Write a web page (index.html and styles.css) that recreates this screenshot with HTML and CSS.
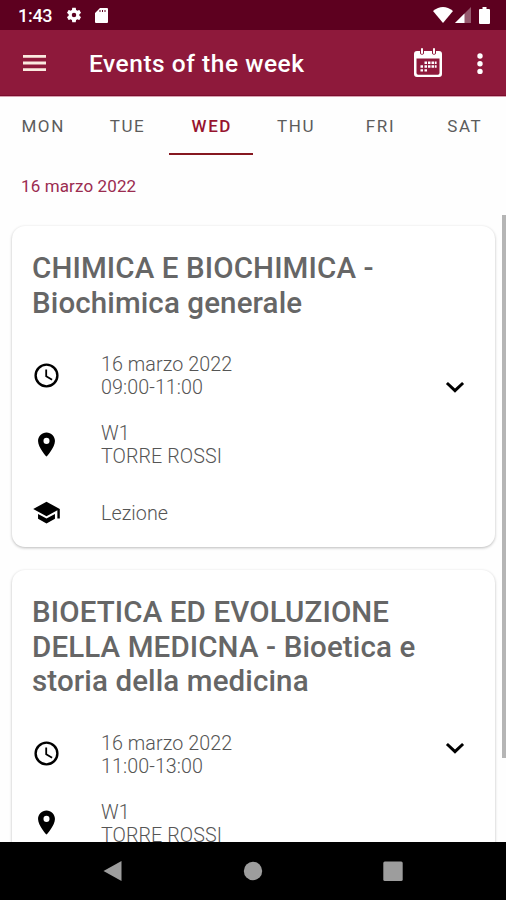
FILE: index.html
```
<!DOCTYPE html>
<html lang="it">
<head>
  <meta charset="UTF-8">
  <title>Events of the week</title>
  <link rel="stylesheet" href="styles.css">
</head>
<body>
  <svg class="symbols" width="0" height="0">
    <symbol id="clock" viewBox="0 0 24 24">
      <path d="M12 2a10 10 0 1 0 0 20 10 10 0 0 0 0-20zm0 18a8 8 0 1 1 0-16 8 8 0 0 1 0 16zm.5-13H11v6l5.250 3.150.750-1.230-4.500-2.670z"/>
    </symbol>
    <symbol id="place" viewBox="0 0 24 24">
      <path d="M12 2C8.130 2 5 5.130 5 9c0 5.250 7 13 7 13s7-7.750 7-13c0-3.870-3.130-7-7-7zm0 9.500a2.500 2.500 0 1 1 0-5 2.500 2.500 0 0 1 0 5z"/>
    </symbol>
    <symbol id="school" viewBox="0 0 24 24">
      <path d="M5 13.180v4L12 21l7-3.820v-4L12 17l-7-3.820zM12 3L1 9l11 6 9-4.910V17h2V9L12 3z"/>
    </symbol>
    <symbol id="expand" viewBox="0 0 24 24">
      <path d="M6.700 8.200L12 13.200l5.300-5 1.500 1.500L12 16.300 5.200 9.700z"/>
    </symbol>
  </svg>

  <div class="status-bar">
    <span class="time">1:43</span>
    <svg class="gear" viewBox="0 0 24 24"><path d="M19.140 12.940c.040-.3.060-.61.060-.94 0-.32-.02-.64-.07-.94l2.030-1.580c.18-.14.23-.41.12-.61l-1.920-3.320c-.12-.22-.37-.29-.59-.22l-2.390.96c-.5-.38-1.030-.7-1.620-.94l-.36-2.540c-.04-.24-.24-.41-.48-.41h-3.840c-.24 0-.43.17-.47.41l-.36 2.540c-.59.24-1.130.57-1.620.94l-2.390-.96c-.22-.08-.47 0-.59.22L2.740 8.870c-.12.21-.08.47.12.61l2.030 1.580c-.05.3-.09.63-.09.94s.02.64.07.94l-2.030 1.580c-.18.14-.23.41-.12.61l1.920 3.320c.12.22.37.29.59.22l2.390-.96c.5.38 1.030.7 1.620.94l.36 2.540c.05.24.24.41.48.41h3.840c.24 0 .44-.17.47-.41l.36-2.540c.59-.24 1.130-.56 1.620-.94l2.390.96c.22.08.47 0 .59-.22l1.920-3.320c.12-.22.07-.47-.12-.61l-2.010-1.580zM12 15a3 3 0 1 1 0-6 3 3 0 0 1 0 6z"/></svg>
    <svg class="sd" viewBox="0 0 13 15"><path fill-rule="evenodd" d="M5 0h7q1 0 1 1v13q0 1-1 1H1q-1 0-1-1V5zM4.500 2v2h1V2zm2.500 0v2h1V2zm2.500 0v2h1V2z"/></svg>
    <svg class="wifi" viewBox="0 0 20 16"><path d="M0 4Q10-4 20 4L10 16z"/></svg>
    <svg class="signal" viewBox="0 0 16 16"><path opacity=".35" d="M16 0v16H0z"/><path d="M9.500 6.500V16H0z"/></svg>
    <svg class="battery" viewBox="0 0 11 17"><path d="M3.500 0h4v2H10q1 0 1 1v13q0 1-1 1H1q-1 0-1-1V3q0-1 1-1h2.500z"/></svg>
  </div>

  <header class="app-bar">
    <svg class="menu" viewBox="0 0 23 16"><path d="M0 0h23v2.800H0zM0 6.600h23v2.800H0zM0 13.200h23V16H0z"/></svg>
    <h1>Events of the week</h1>
    <svg class="calendar" viewBox="0 0 28 30">
      <path fill-rule="evenodd" d="M3 3h3v2.500q2 2.500 4 0V3h8v2.500q2 2.500 4 0V3h3q3 0 3 3v20q0 3-3 3H3q-3 0-3-3V6q0-3 3-3zM2.500 10.500V25q0 1.700 1.700 1.700h19.600q1.700 0 1.700-1.700V10.500z"/>
      <rect x="7" y="0" width="2" height="6" rx="1"/>
      <rect x="19" y="0" width="2" height="6" rx="1"/>
      <path d="M10.500 13.500h2.500V16h-2.500zM14 13.500h2.500V16H14zM17.500 13.500H20V16h-2.500zM20.800 13.500h1.800V16h-1.800zM6.500 17.300H9v2.500H6.500zM10.500 17.300h2.500v2.500h-2.500zM14 17.300h2.500v2.500H14zM17.500 17.300H20v2.500h-2.500zM20.800 17.300h1.800v2.500h-1.800zM6.500 21.300H9v2.300H6.500zM10.500 21.300h2.500v2.300h-2.500z"/>
    </svg>
    <svg class="more" viewBox="0 0 6 22"><circle cx="3" cy="3" r="2.700"/><circle cx="3" cy="10.700" r="2.700"/><circle cx="3" cy="18.400" r="2.700"/></svg>
  </header>

  <nav class="tabs">
    <a>MON</a>
    <a>TUE</a>
    <a class="active">WED</a>
    <a>THU</a>
    <a>FRI</a>
    <a>SAT</a>
  </nav>

  <main>
    <p class="day">16 marzo 2022</p>

    <article class="card">
      <div class="card-body">
        <h2>CHIMICA E BIOCHIMICA -<br>Biochimica generale</h2>
        <div class="row">
          <svg><use href="#clock"/></svg>
          <p>16 marzo 2022<br>09:00-11:00</p>
        </div>
        <div class="row">
          <svg><use href="#place"/></svg>
          <p>W1<br>TORRE ROSSI</p>
        </div>
        <div class="row type">
          <svg><use href="#school"/></svg>
          <p>Lezione</p>
        </div>
      </div>
      <svg class="expand"><use href="#expand"/></svg>
    </article>

    <article class="card">
      <div class="card-body">
        <h2>BIOETICA ED EVOLUZIONE<br>DELLA MEDICNA - Bioetica e<br>storia della medicina</h2>
        <div class="row">
          <svg><use href="#clock"/></svg>
          <p>16 marzo 2022<br>11:00-13:00</p>
        </div>
        <div class="row">
          <svg><use href="#place"/></svg>
          <p>W1<br>TORRE ROSSI</p>
        </div>
        <div class="row type"></div>
      </div>
      <svg class="expand"><use href="#expand"/></svg>
    </article>

    <div class="scrollbar"></div>
  </main>

  <footer class="nav-bar">
    <svg viewBox="0 0 20 22"><path d="M18.500 1v20L.5 11z"/></svg>
    <svg viewBox="0 0 20 22"><circle cx="10" cy="11" r="9.200"/></svg>
    <svg viewBox="0 0 20 22"><rect x=".3" y="1.600" width="19.400" height="19.400" rx="1.500"/></svg>
  </footer>
</body>
</html>
```
FILE: styles.css
```
* {
  box-sizing: border-box;
  margin: 0;
  padding: 0;
}

body {
  font-family: Roboto, sans-serif;
  height: 900px;
  overflow: hidden;
  display: flex;
  flex-direction: column;
  background: #fefefe;
}

svg {
  display: block;
  flex: none;
}

.symbols {
  position: absolute;
}

.status-bar {
  height: 30px;
  flex: none;
  display: flex;
  align-items: center;
  padding: 0 16px 0 18px;
  background: #5d001f;
  color: #fff;
  fill: #fff;
}

.time {
  width: 47px;
  font-size: 18px;
  font-weight: 500;
  letter-spacing: -.3px;
  line-height: 30px;
  padding-top: 2px;
}

.gear {
  width: 18px;
  height: 18px;
}

.sd {
  width: 13px;
  height: 15px;
  margin-left: 12px;
}

.wifi {
  width: 20px;
  height: 16px;
  margin-left: auto;
}

.signal {
  width: 16px;
  height: 16px;
  margin-left: 2px;
}

.battery {
  width: 11px;
  height: 17px;
  margin-left: 8px;
}

.app-bar {
  height: 66px;
  flex: none;
  display: flex;
  align-items: center;
  padding: 0 23px;
  background: #8e193b;
  border-bottom: 1px solid #7b0d2d;
  color: #fff;
  fill: #fff;
}

.menu {
  width: 23px;
  height: 16px;
  margin-top: 1px;
  fill: #fbeae0;
}

.app-bar h1 {
  margin-left: 43px;
  font-size: 24.5px;
  font-weight: 500;
  letter-spacing: .53px;
  line-height: 32px;
  padding-top: 3px;
}

.calendar {
  width: 28px;
  height: 30px;
  margin-left: auto;
}

.more {
  width: 6px;
  height: 22px;
  margin: 2px 0 0 35px;
}

.tabs {
  height: 60px;
  flex: none;
  display: flex;
  border-top: 1px solid #d8a0b0;
}

.tabs a {
  flex: 1;
  text-align: center;
  padding-left: 2px;
  font-size: 17px;
  letter-spacing: 1.6px;
  line-height: 58px;
  color: #5c5c5c;
}

.tabs .active {
  color: #97142f;
  font-weight: 500;
  height: 58px;
  border-bottom: 2px solid #861820;
}

main {
  position: relative;
  flex: 1;
  min-height: 0;
  overflow: hidden;
}

.day {
  margin: 18px 21px 28px;
  font-size: 17px;
  letter-spacing: .12px;
  line-height: 24px;
  color: #9b2c50;
}

.card {
  display: flex;
  align-items: center;
  margin: 0 11px 23px 12px;
  padding: 25px 24px 22px 20px;
  background: #fff;
  border-radius: 13px;
  box-shadow: 0 1px 3px rgba(0,0,0,0.27);
}

.card-body {
  flex: 1;
}

.card h2 {
  font-size: 29.5px;
  font-weight: 500;
  letter-spacing: .12px;
  line-height: 34.5px;
  color: #666;
  margin-bottom: 33px;
  white-space: nowrap;
}

.row {
  display: flex;
  align-items: center;
  margin-bottom: 23px;
}

.row svg {
  width: 29px;
  height: 29px;
  margin: -2px 40px 0 0;
}

.row p {
  font-size: 19.7px;
  font-weight: 300;
  letter-spacing: .07px;
  line-height: 23px;
  color: #555;
}

.row.type {
  height: 23px;
  margin: 34px 0 0;
}

.expand {
  width: 32px;
  height: 32px;
  margin: -2px 0 0 -8px;
}

.scrollbar {
  position: absolute;
  top: 59px;
  right: 0;
  width: 4px;
  height: 543px;
  background: #b5b5b5;
}

.nav-bar {
  height: 58px;
  flex: none;
  display: flex;
  justify-content: center;
  gap: 120px;
  padding-top: 18px;
  background: #000;
  fill: #9d9d9d;
}

.nav-bar svg {
  width: 20px;
  height: 22px;
}
```
